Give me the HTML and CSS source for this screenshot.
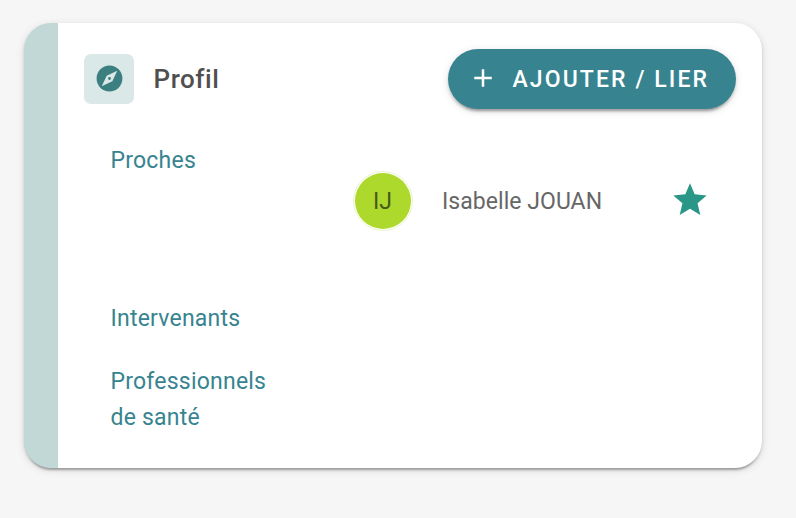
FILE: index.html
```
<!DOCTYPE html>
<html lang="fr">
<head>
  <meta charset="utf-8" />
  <title>Profil</title>
  <link rel="stylesheet" href="styles.css">
</head>
<body>
  <div class="card">
    <div class="card-header">
      <div class="header-icon">
        <svg viewBox="0 0 24 24"><path d="M14.19,14.19L6,18L9.81,9.81L18,6M12,2A10,10 0 0,0 2,12A10,10 0 0,0 12,22A10,10 0 0,0 22,12A10,10 0 0,0 12,2M12,10.9A1.1,1.1 0 0,0 10.9,12A1.1,1.1 0 0,0 12,13.1A1.1,1.1 0 0,0 13.1,12A1.1,1.1 0 0,0 12,10.9Z"/></svg>
      </div>
      <h1>Profil</h1>
      <button class="btn">
        <svg viewBox="0 0 24 24"><path d="M19,13H13V19H11V13H5V11H11V5H13V11H19V13Z"/></svg>
        <span>AJOUTER / LIER</span>
      </button>
    </div>

    <!-- Proches -->
    <div class="section section-proches">
      <div class="section-title">Proches</div>
      <div class="person">
        <div class="avatar">IJ</div>
        <span class="person-name">Isabelle JOUAN</span>
        <svg class="star" viewBox="0 0 24 24"><path d="M12,17.27L18.18,21L16.54,13.97L22,9.24L14.81,8.62L12,2L9.19,8.62L2,9.24L7.45,13.97L5.82,21L12,17.27Z"/></svg>
      </div>
    </div>

    <!-- Intervenants -->
    <div class="section section-intervenants">
      <div class="section-title">Intervenants</div>
    </div>

    <!-- Professionnels de santé -->
    <div class="section">
      <div class="section-title">Professionnels de santé</div>
    </div>
  </div>
</body>
</html>
```
FILE: styles.css
```
* {
  margin: 0;
  padding: 0;
  box-sizing: border-box;
}

body {
  font-family: Roboto, "Liberation Sans", sans-serif;
  background: #f6f6f6;
  padding: 23px 34px 0 24px;
  height: 518px;
  overflow: hidden;
}

.card {
  height: 445px;
  background: white;
  border-left: 34px solid #c2d8d6;
  border-radius: 27px;
  padding: 26px 26px 0;
  box-shadow: 0 5px 2px -3px rgba(0,0,0,0.2), 0 2px 3px 0 rgba(0,0,0,0.14), 0 2px 8px 0 rgba(0,0,0,0.12);
}

.card-header {
  display: flex;
  align-items: center;
  height: 60px;
}

.header-icon {
  display: flex;
  align-items: center;
  justify-content: center;
  width: 50px;
  height: 50px;
  padding-bottom: 2px;
  background: #dae8e7;
  border-radius: 7px;
}

.header-icon svg {
  width: 31px;
  height: 31px;
  fill: #3b7f80;
}

h1 {
  margin-left: 19.5px;
  font-size: 26px;
  font-weight: 500;
  letter-spacing: 0.55px;
  color: #4f4f4f;
}

.btn {
  display: flex;
  align-items: center;
  width: 288px;
  height: 60px;
  margin-left: auto;
  padding: 0 0 2px 20px;
  border: none;
  border-radius: 30px;
  background: #378490;
  color: white;
  font-family: inherit;
  font-size: 23px;
  font-weight: 500;
  letter-spacing: 2.1px;
  white-space: nowrap;
  box-shadow: 0 5px 2px -3px rgba(0,0,0,0.2), 0 3px 3px 0 rgba(0,0,0,0.14), 0 2px 8px 0 rgba(0,0,0,0.12);
}

.btn svg {
  width: 30px;
  height: 30px;
  margin-right: 14.5px;
  fill: white;
}

.btn span {
  padding-top: 3px;
}

.section {
  display: flex;
  padding-left: 26.5px;
  font-size: 23px;
  line-height: 36px;
}

.section-proches {
  height: 158px;
  margin-top: 34px;
}

.section-intervenants {
  height: 63px;
}

.section-title {
  width: 180px;
  letter-spacing: 0.22px;
  color: #378490;
}

.person {
  display: flex;
  align-items: center;
  flex: 1;
  height: 60px;
  margin-top: 28px;
  padding-left: 62px;
}

/* thin halo around the coloured disc */
.avatar {
  width: 60px;
  height: 60px;
  padding: 1px;
  border: 1px solid #eaf6ca;
  border-radius: 50%;
  background: #acd92b;
  background-clip: content-box;
  color: #48591c;
  line-height: 58px;
  text-align: center;
}

.person-name {
  width: 228px;
  margin-left: 29.5px;
  padding-top: 1px;
  letter-spacing: 0.05px;
  color: #666;
}

.star {
  width: 40px;
  height: 40px;
  margin-bottom: 2px;
  fill: #2a9687;
}
```
